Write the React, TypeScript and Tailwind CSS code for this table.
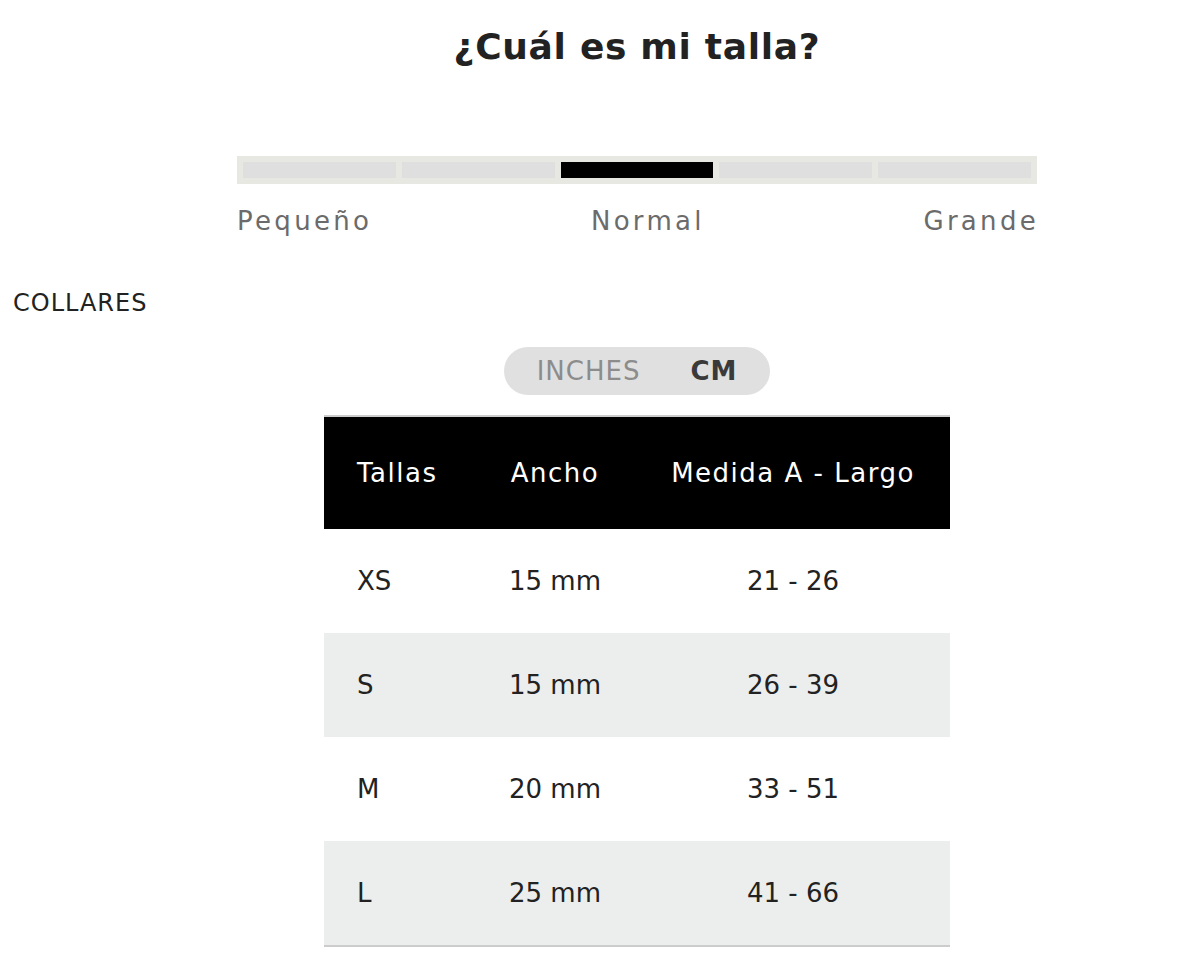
import React from 'react';

const rows = [
  { size: 'XS', width: '15 mm', range: '21 - 26' },
  { size: 'S', width: '15 mm', range: '26 - 39' },
  { size: 'M', width: '20 mm', range: '33 - 51' },
  { size: 'L', width: '25 mm', range: '41 - 66' },
];

const App: React.FC = () => {
  return (
    <div className="bg-white min-h-screen font-['DejaVu_Sans','Liberation_Sans',sans-serif] text-[#222]">
      <h1 className="pt-[23px] pl-[72px] text-center text-[36px] leading-[48px] font-bold tracking-[0.7px] text-[#222]">¿Cuál es mi talla?</h1>

      {/* fit scale */}
      <div className="pl-[72px]">
        <div className="mx-auto mt-[85px] w-[800px]">
          <div className="flex gap-[6px] bg-[#e8e8e3] p-[6px]">
            {[0, 1, 2, 3, 4].map((i) => (
              <div key={i} className={i === 2 ? 'h-4 flex-1 bg-black' : 'h-4 flex-1 bg-[#dfdfdf]'} />
            ))}
          </div>
          <div className="mt-[19px] flex justify-between text-[26px] leading-[36px] tracking-[3.3px] text-[#6b6b6b]">
            <span>Pequeño</span>
            <span>Normal</span>
            <span className="-mr-[2px]">Grande</span>
          </div>
        </div>
      </div>

      <h2 className="mt-[48px] pl-[13px] text-[24px] leading-[32px] tracking-[1px] text-[#222]">COLLARES</h2>

      <div className="mt-[28px] flex justify-center pl-[72px]">
        <div className="flex h-12 w-[266px] items-center justify-center gap-[50px] rounded-full bg-[#e0e0e0] text-[26px] tracking-[1px]">
          <span className="text-[#8c8c8c]">INCHES</span>
          <span className="font-bold text-[#3a3a3a]">CM</span>
        </div>
      </div>

      <div className="pl-[72px]">
        <div className="mx-auto mt-[20px] w-[626px] border-y-2 border-[#cccccc]">
          <div className="grid h-[112px] grid-cols-[150px_162px_314px] items-center bg-black text-[26px] font-medium tracking-[1.5px] text-white">
            <span className="pl-[33px]">Tallas</span>
            <span className="text-center">Ancho</span>
            <span className="text-center">Medida A - Largo</span>
          </div>
          {rows.map((r, i) => (
            <div
              key={r.size}
              className={
                i % 2 === 1
                  ? 'grid h-[104px] grid-cols-[150px_162px_314px] items-center bg-[#eceeed] text-[26px]'
                  : 'grid h-[104px] grid-cols-[150px_162px_314px] items-center bg-white text-[26px]'
              }
            >
              <span className="pl-[33px]">{r.size}</span>
              <span className="text-center">{r.width}</span>
              <span className="text-center">{r.range}</span>
            </div>
          ))}
        </div>
      </div>
    </div>
  );
};

export default App;
